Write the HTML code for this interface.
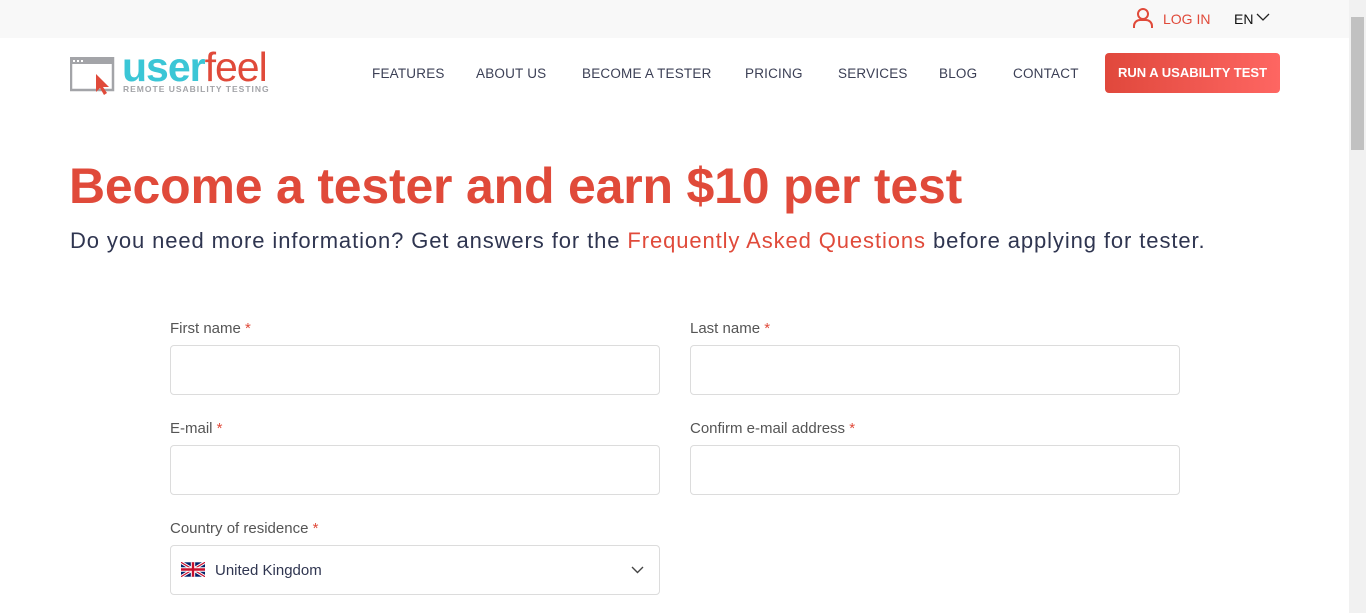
<!DOCTYPE html>
<html><head><meta charset="utf-8"><style>
*{box-sizing:border-box;margin:0;padding:0}
body{width:1366px;height:613px;overflow:hidden;background:#fff;font-family:"Liberation Sans",sans-serif;position:relative}
.top{position:absolute;left:0;top:0;width:1349px;height:38px;background:#f8f8f8}
.sb{position:absolute;left:1349px;top:0;width:17px;height:613px;background:#f1f1f1}
.sb .th{position:absolute;left:2px;top:17px;width:13px;height:133px;background:#c1c1c1}
.abs{position:absolute}
.nav{position:absolute;top:66px;font-size:13.5px;color:#3b3f55;letter-spacing:0.2px}
.btn{position:absolute;left:1105px;top:53px;width:175px;height:40px;border-radius:4px;background:linear-gradient(90deg,#e0483c,#fe6662);color:#fff;font-weight:bold;font-size:13px;text-align:center;line-height:40px}
h1{position:absolute;left:69px;top:157px;font-size:50px;font-weight:bold;color:#e04a3a;letter-spacing:-0.2px;white-space:nowrap}
.sub{position:absolute;left:70px;top:228px;font-size:22px;color:#2f3550;white-space:nowrap;letter-spacing:0.9px}
.sub span{color:#e04a3a}
.lbl{position:absolute;font-size:15px;color:#555;top:0}
.lbl i{font-style:normal;color:#e04a3a}
.in{position:absolute;width:490px;height:50px;border:1px solid #dcdcdc;border-radius:4px;background:#fff}
</style></head><body>
<div class="top"></div>
<div class="sb"><div class="th"></div></div>
<svg class="abs" style="left:1132px;top:7px" width="22" height="22" viewBox="0 0 22 22" fill="none" stroke="#e04a3a" stroke-width="2"><circle cx="11" cy="7" r="5"/><path d="M2 21v-2a6 6 0 0 1 6-6h6a6 6 0 0 1 6 6v2"/></svg>
<div class="abs" style="left:1163px;top:11px;font-size:14px;color:#e04a3a">LOG IN</div>
<div class="abs" style="left:1234px;top:11px;font-size:14px;color:#111">EN</div>
<svg class="abs" style="left:1256px;top:13px" width="14" height="9" viewBox="0 0 14 9" fill="none" stroke="#222" stroke-width="1.3"><path d="M1 1l6 6 6-6"/></svg>
<svg class="abs" style="left:70px;top:57px" width="45" height="40" viewBox="0 0 45 40"><rect x="1" y="1" width="42" height="32" fill="none" stroke="#a3a4a8" stroke-width="2.5"/><rect x="1" y="1" width="42" height="6" fill="#a3a4a8"/><rect x="3" y="3" width="2" height="2" fill="#fff"/><rect x="7" y="3" width="2" height="2" fill="#fff"/><rect x="11" y="3" width="2" height="2" fill="#fff"/><path d="M26 17l0 18 4-4 4 7 3-2-4-6 6 0z" fill="#e04a3a"/></svg>
<div class="abs" style="left:122px;top:44px;font-size:41px;font-weight:bold;letter-spacing:-1px;color:#3bc6d6">user<span style="color:#e04a3a;font-weight:normal">feel</span></div>
<div class="abs" style="left:123px;top:84px;font-size:8.5px;letter-spacing:1.0px;color:#a3a4a8;font-weight:bold">REMOTE USABILITY TESTING</div>
<div class="nav" style="left:372px">FEATURES</div>
<div class="nav" style="left:476px">ABOUT US</div>
<div class="nav" style="left:582px">BECOME A TESTER</div>
<div class="nav" style="left:745px">PRICING</div>
<div class="nav" style="left:838px">SERVICES</div>
<div class="nav" style="left:939px">BLOG</div>
<div class="nav" style="left:1013px">CONTACT</div>
<div class="btn">RUN A USABILITY TEST</div>
<h1>Become a tester and earn $10 per test</h1>
<div class="sub">Do you need more information? Get answers for the <span>Frequently Asked Questions</span> before applying for tester.</div>
<div class="lbl" style="left:170px;top:320px">First name <i>*</i></div>
<div class="lbl" style="left:690px;top:320px">Last name <i>*</i></div>
<div class="in" style="left:170px;top:345px"></div>
<div class="in" style="left:690px;top:345px"></div>
<div class="lbl" style="left:170px;top:420px">E-mail <i>*</i></div>
<div class="lbl" style="left:690px;top:420px">Confirm e-mail address <i>*</i></div>
<div class="in" style="left:170px;top:445px"></div>
<div class="in" style="left:690px;top:445px"></div>
<div class="lbl" style="left:170px;top:520px">Country of residence <i>*</i></div>
<div class="in" style="left:170px;top:545px"></div>
<svg class="abs" style="left:181px;top:562px" width="24" height="15" viewBox="0 0 60 36"><rect width="60" height="36" fill="#012169"/><path d="M0 0L60 36M60 0L0 36" stroke="#fff" stroke-width="8"/><path d="M0 0L60 36M60 0L0 36" stroke="#c8102e" stroke-width="3"/><path d="M30 0v36M0 18h60" stroke="#fff" stroke-width="11"/><path d="M30 0v36M0 18h60" stroke="#c8102e" stroke-width="6"/></svg>
<div class="abs" style="left:215px;top:562px;font-size:15px;color:#2f3550">United Kingdom</div>
<svg class="abs" style="left:631px;top:566px" width="13" height="8" viewBox="0 0 13 8" fill="none" stroke="#444" stroke-width="1.4"><path d="M1 1l5.5 5.5L12 1"/></svg>
</body></html>
